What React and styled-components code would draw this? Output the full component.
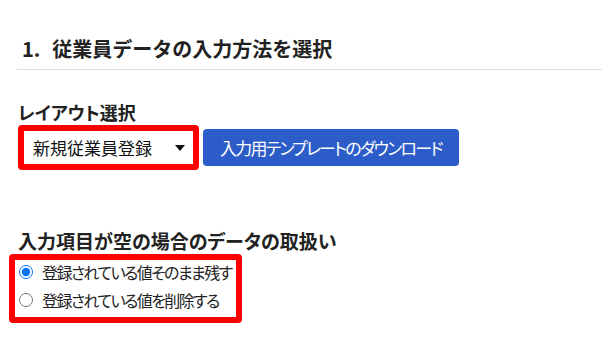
import React from "react";
import styled, { createGlobalStyle } from "styled-components";

const Global = createGlobalStyle`
  html, body { margin: 0; padding: 0; background: #fff; }
  body {
    font-family: "Noto Sans CJK JP", "Noto Sans", sans-serif;
    color: #222;
  }
`;

const Page = styled.div`
  padding: 0 0 0 18px;
  width: 602px;
  box-sizing: border-box;
`;

const Heading = styled.h2`
  margin: 0 0 0 -1px;
  padding: 34px 0 6px 5px;
  font-size: 20px;
  line-height: 29px;
  font-weight: 700;
  color: #222;
  border-bottom: 1px solid #dcdcdc;
`;

const Num = styled.span`
  margin-right: 12px;
`;

const Section = styled.section`
  display: flex;
  flex-direction: column;
  align-items: flex-start;
  margin-top: ${(p) => p.$top}px;
`;

const Label = styled.div`
  font-size: ${(p) => p.$size}px;
  line-height: 22px;
  font-weight: 700;
  color: #222;
  font-feature-settings: "palt";
`;

const Row = styled.div`
  display: flex;
  align-items: center;
  gap: 4px;
  margin-top: 2px;
`;

const SelectWrap = styled.div`
  position: relative;
  display: flex;
`;

const Select = styled.select`
  appearance: none;
  -webkit-appearance: none;
  width: 181px;
  height: 45px;
  box-sizing: border-box;
  border: 6px solid #f00;
  border-radius: 4px;
  background: #fff;
  padding: 0 0 0 9px;
  font-family: "Noto Sans CJK JP", sans-serif;
  font-size: 17px;
  color: #111;
  outline: none;
`;

const Caret = styled.span`
  position: absolute;
  right: 14px;
  top: 20px;
  width: 0;
  height: 0;
  border-left: 5px solid transparent;
  border-right: 5px solid transparent;
  border-top: 6px solid #111;
  pointer-events: none;
`;

const Button = styled.button`
  width: 256px;
  height: 37px;
  border: none;
  border-radius: 4px;
  background: #2c5cc8;
  color: #fff;
  font-family: "Noto Sans CJK JP", sans-serif;
  font-size: 17px;
  font-feature-settings: "palt";
  letter-spacing: -1.8px;
  padding: 0;
  cursor: pointer;
`;

const RadioBox = styled.div`
  margin: 2px 0 0 -9px;
  width: 233px;
  box-sizing: border-box;
  border: 6px solid #f00;
  border-radius: 4px;
  padding: 0 0 5px 4px;
  display: flex;
  flex-direction: column;
  gap: 4px;
`;

const RadioRow = styled.label`
  display: flex;
  align-items: center;
  height: 24px;
  gap: 9px;
  font-size: 16px;
  letter-spacing: -1.6px;
  color: #222;
  font-feature-settings: "palt";
  white-space: nowrap;
`;

const Radio = styled.input`
  margin: 0;
  width: 14px;
  height: 14px;
`;

export default function App() {
  return (
    <>
      <Global />
      <Page>
        <Heading>
          <Num>1.</Num>従業員データの入力方法を選択
        </Heading>
        <Section $top={31}>
          <Label $size={18}>レイアウト選択</Label>
          <Row>
            <SelectWrap>
              <Select defaultValue="new">
                <option value="new">新規従業員登録</option>
              </Select>
              <Caret />
            </SelectWrap>
            <Button>入力用テンプレートのダウンロード</Button>
          </Row>
        </Section>
        <Section $top={60}>
          <Label $size={19}>入力項目が空の場合のデータの取扱い</Label>
          <RadioBox>
            <RadioRow>
              <Radio type="radio" name="empty" defaultChecked />
              登録されている値そのまま残す
            </RadioRow>
            <RadioRow>
              <Radio type="radio" name="empty" />
              登録されている値を削除する
            </RadioRow>
          </RadioBox>
        </Section>
      </Page>
    </>
  );
}
